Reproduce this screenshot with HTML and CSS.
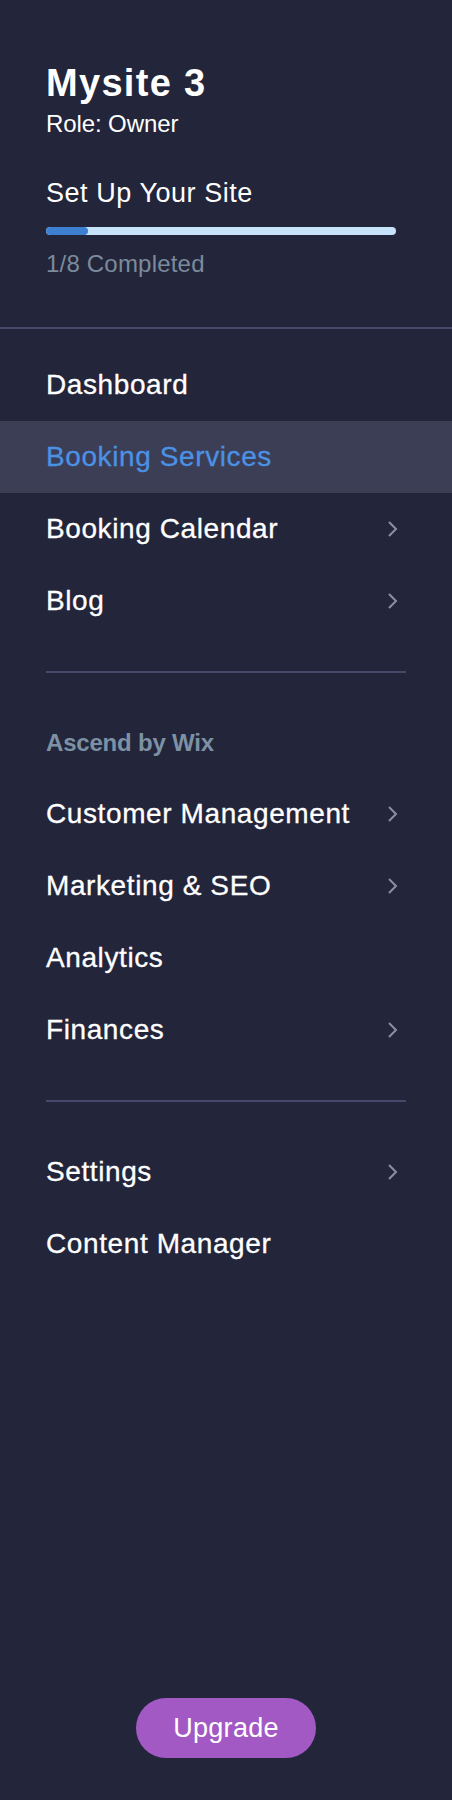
FILE: index.html
```html
<!DOCTYPE html>
<html lang="en">
<head>
<meta charset="utf-8">
<title>Mysite 3</title>
<link rel="stylesheet" href="styles.css">
</head>
<body>
<aside class="sidebar">
  <header class="site-header">
    <h1 class="site-name">Mysite 3</h1>
    <div class="site-role">Role: Owner</div>
    <div class="setup-title">Set Up Your Site</div>
    <div class="progress"><div class="progress-fill" style="width: 12%"></div></div>
    <div class="progress-label">1/8 Completed</div>
  </header>
  <div class="rule"></div>
  <nav class="nav">
    <ul class="nav-group first">
      <li class="nav-item">Dashboard</li>
      <li class="nav-item active">Booking Services</li>
      <li class="nav-item">Booking Calendar<svg class="chev" width="12" height="18" viewBox="0 0 12 18"><polyline points="3,2 10,9 3,16"/></svg></li>
      <li class="nav-item">Blog<svg class="chev" width="12" height="18" viewBox="0 0 12 18"><polyline points="3,2 10,9 3,16"/></svg></li>
    </ul>
    <div class="section-rule"></div>
    <div class="section-label">Ascend by Wix</div>
    <ul class="nav-group">
      <li class="nav-item">Customer Management<svg class="chev" width="12" height="18" viewBox="0 0 12 18"><polyline points="3,2 10,9 3,16"/></svg></li>
      <li class="nav-item">Marketing &amp; SEO<svg class="chev" width="12" height="18" viewBox="0 0 12 18"><polyline points="3,2 10,9 3,16"/></svg></li>
      <li class="nav-item">Analytics</li>
      <li class="nav-item">Finances<svg class="chev" width="12" height="18" viewBox="0 0 12 18"><polyline points="3,2 10,9 3,16"/></svg></li>
    </ul>
    <div class="section-rule"></div>
    <ul class="nav-group last">
      <li class="nav-item">Settings<svg class="chev" width="12" height="18" viewBox="0 0 12 18"><polyline points="3,2 10,9 3,16"/></svg></li>
      <li class="nav-item">Content Manager</li>
    </ul>
  </nav>
  <div class="footer">
    <button class="upgrade">Upgrade</button>
  </div>
</aside>
</body>
</html>
```

FILE: styles.css
```css
* { box-sizing: border-box; }
html, body {
  margin: 0;
  padding: 0;
  background: #23253a;
}
body {
  font-family: "Liberation Sans", Arial, sans-serif;
  color: #ffffff;
}
.sidebar {
  min-height: 1800px;
  display: flex;
  flex-direction: column;
  background: #23253a;
  padding-bottom: 42px;
}
.site-header {
  padding: 61px 46px 49px;
}
.site-name {
  margin: 0;
  font-size: 38px;
  line-height: 44px;
  font-weight: 700;
  letter-spacing: 1.3px;
}
.site-role {
  margin-top: 5px;
  font-size: 24px;
  line-height: 28px;
  letter-spacing: -0.1px;
}
.setup-title {
  margin-top: 39px;
  font-size: 27px;
  line-height: 32px;
  letter-spacing: 0.55px;
}
.progress {
  margin-top: 18px;
  width: 350px;
  height: 8px;
  border-radius: 4px;
  background: #c6e3fa;
  overflow: hidden;
}
.progress-fill {
  height: 100%;
  border-radius: 4px;
  background: #3d7fd0;
}
.progress-label {
  margin-top: 15px;
  font-size: 24px;
  line-height: 28px;
  color: #7b8b9c;
  letter-spacing: 0.2px;
}
.rule {
  height: 2px;
  background: #45486a;
}
.nav-group {
  list-style: none;
  margin: 0;
  padding: 0;
}
.nav-group.first { margin-top: 20px; }
.nav-item {
  height: 72px;
  padding: 0 54px 0 46px;
  display: flex;
  align-items: center;
  justify-content: space-between;
  font-size: 28px;
  line-height: 72px;
  letter-spacing: 0.6px;
  color: #ffffff;
  -webkit-text-stroke: 0.3px #ffffff;
}
.nav-item.active {
  background: #3c3e56;
  color: #4b91e4;
  -webkit-text-stroke: 0.3px #4b91e4;
}
.chev {
  flex: none;
  fill: none;
  stroke: #8b8fa5;
  stroke-width: 2;
}
.section-rule {
  height: 2px;
  margin: 34px 46px 0;
  background: #45486a;
}
.section-label {
  margin: 56px 46px 21px;
  font-size: 24px;
  line-height: 28px;
  font-weight: 700;
  letter-spacing: -0.2px;
  color: #7d91a5;
}
.nav-group.last { margin-top: 34px; }
.footer {
  margin-top: auto;
  display: flex;
  justify-content: center;
}
.upgrade {
  width: 180px;
  height: 60px;
  border: none;
  border-radius: 30px;
  background: #a259c4;
  color: #ffffff;
  font-family: "Liberation Sans", Arial, sans-serif;
  font-size: 27px;
  letter-spacing: 0.3px;
  cursor: pointer;
}
```
